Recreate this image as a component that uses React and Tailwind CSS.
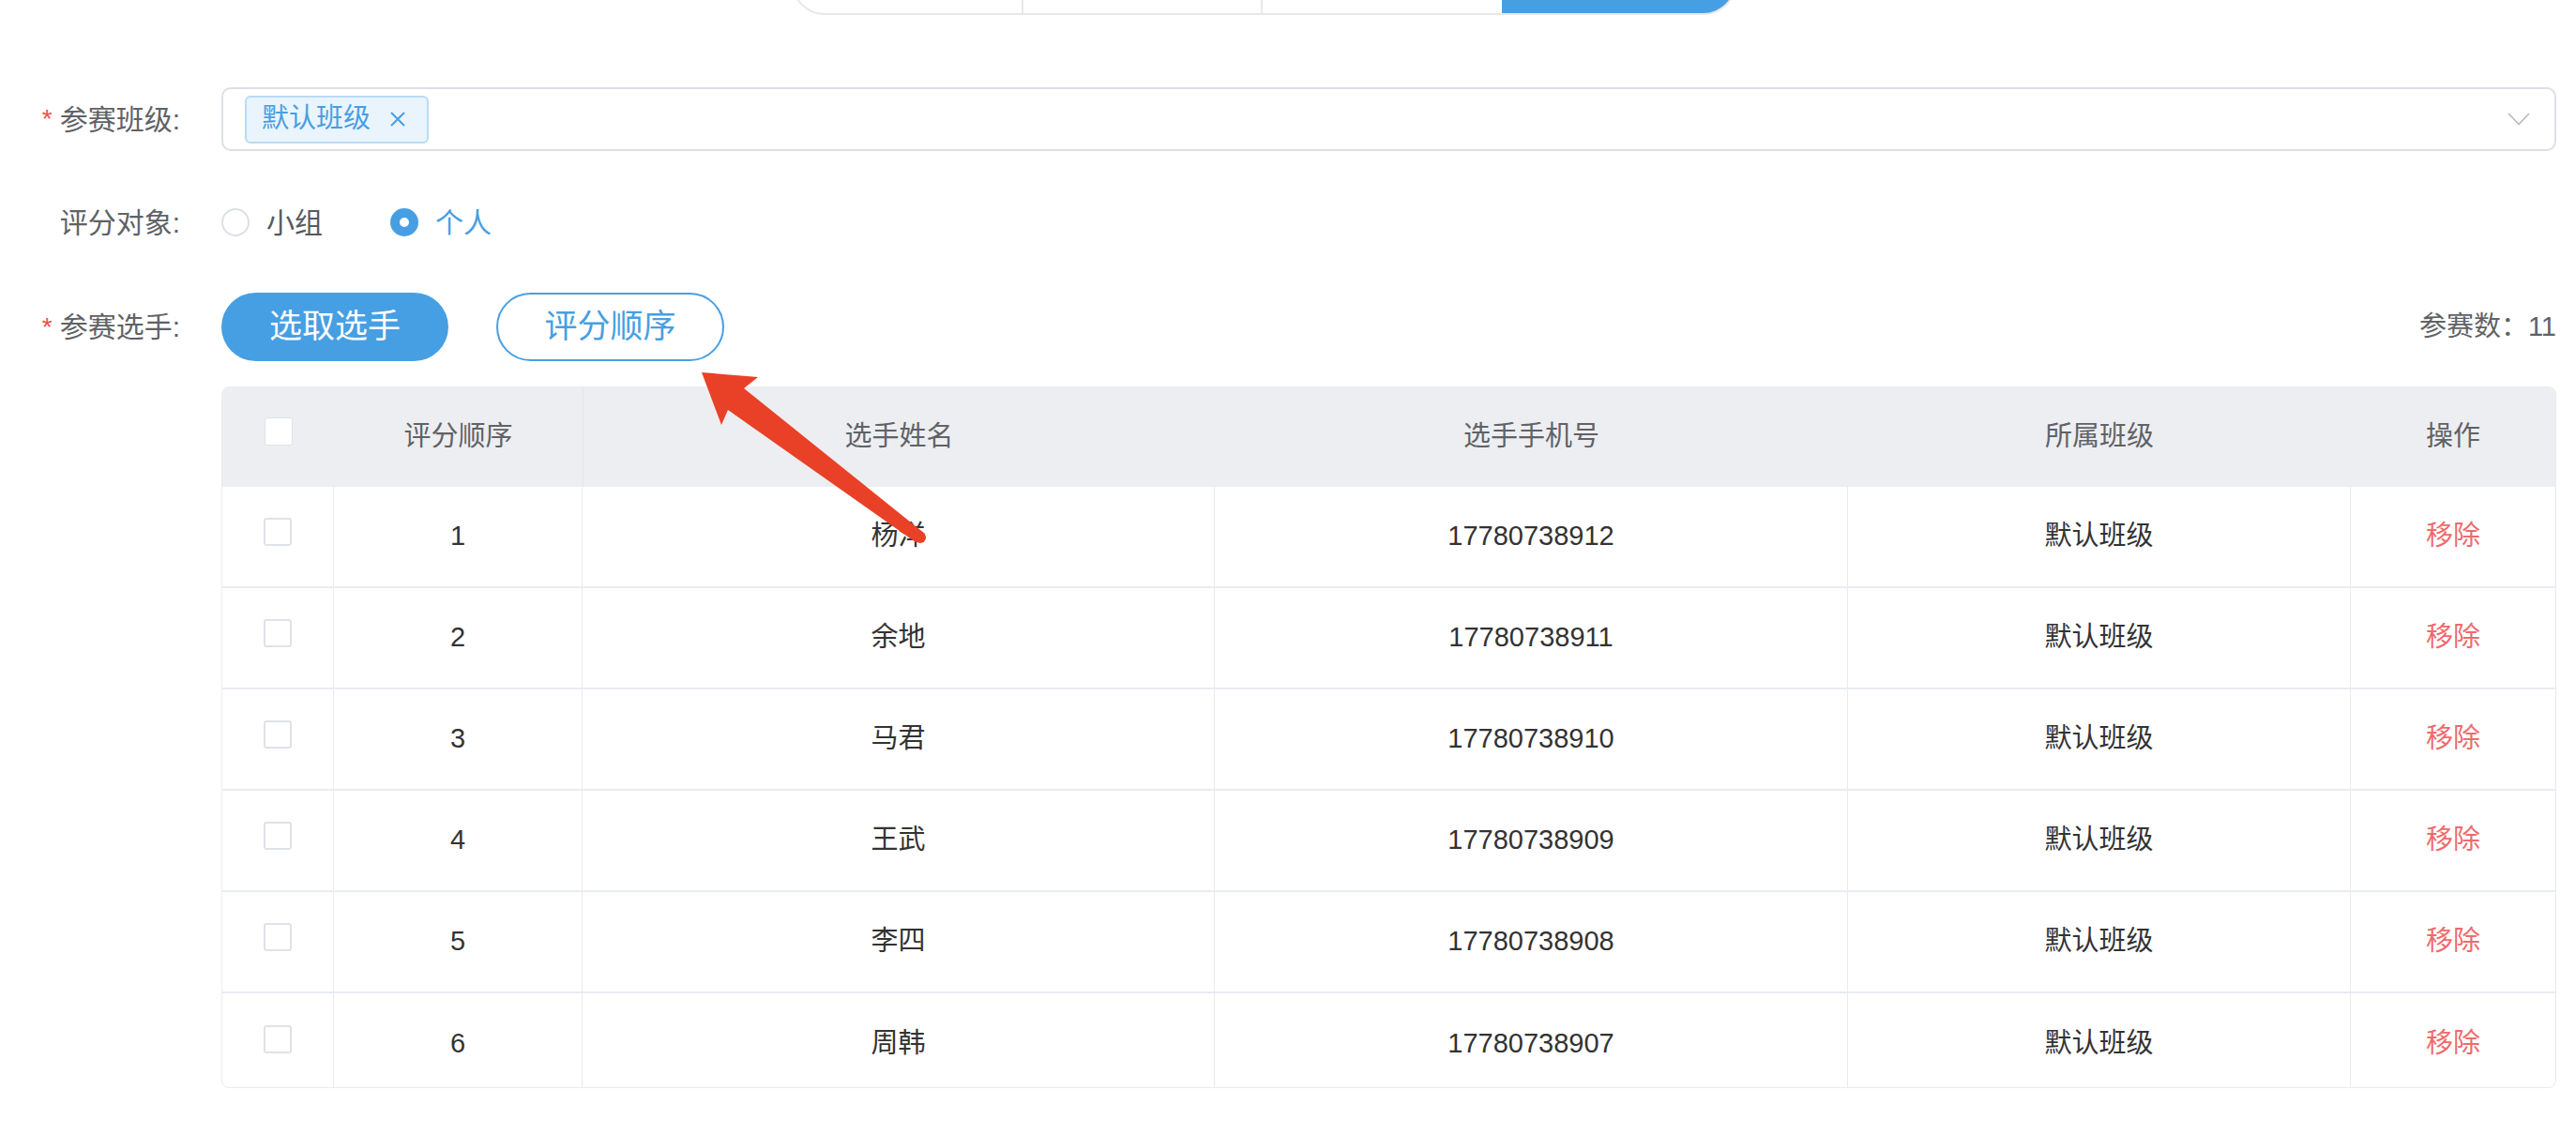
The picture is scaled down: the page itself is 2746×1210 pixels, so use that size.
import React from 'react';

const players = [
  { order: 1, name: '杨洋', phone: '17780738912' },
  { order: 2, name: '余地', phone: '17780738911' },
  { order: 3, name: '马君', phone: '17780738910' },
  { order: 4, name: '王武', phone: '17780738909' },
  { order: 5, name: '李四', phone: '17780738908' },
  { order: 6, name: '周韩', phone: '17780738907' },
];

const cols = ['w-[119px]', 'w-[265px]', 'w-[674px]', 'w-[675px]', 'w-[536px]', 'flex-1'];

function Label({ required, children }) {
  return (
    <div className="w-[236px] shrink-0 pr-[44px] flex justify-end items-center text-[30px] text-[#606266]">
      {required && <span className="text-[#f0504a] mr-[8px] text-[28px]">*</span>}
      <span>{children}</span>
    </div>
  );
}

function Checkbox() {
  return <div className="w-[30px] h-[30px] rounded-[3px] border-2 border-[#dfe2e8] bg-white mb-[10px]" />;
}

function Cell({ i, children, className = '' }) {
  return (
    <div className={`${cols[i]} h-full flex items-center justify-center ${i < 5 ? 'border-r border-[#e8ebf1]' : ''} ${className}`}>
      {children}
    </div>
  );
}

export default function App() {
  return (
    <div className="relative flex flex-col w-[2746px] h-[1210px] overflow-hidden bg-white font-['Liberation_Sans','Noto_Sans_CJK_SC',sans-serif]">
      {/* segmented tabs, cut at the top */}
      <div className="-mt-[54px] ml-[844px] w-[1007px] h-[70px] shrink-0 flex rounded-full border-2 border-[#e8e8e8] overflow-hidden">
        <div className="w-[245px] border-r-2 border-[#e8e8e8]" />
        <div className="w-[255px] border-r-2 border-[#e8e8e8]" />
        <div className="w-[255px]" />
        <div className="flex-1 bg-[#479fe3]" />
      </div>

      {/* 参赛班级 */}
      <div className="mt-[77px] flex items-center h-[68px] shrink-0">
        <Label required>参赛班级:</Label>
        <div className="w-[2489px] h-[68px] rounded-[10px] border-2 border-[#dcdfe6] flex items-center pl-[23px] pr-[26px]">
          <div className="h-[51px] flex items-center pl-[16px] pr-[22px] rounded-[6px] border-2 border-[#b9dbf5] bg-[#eaf4fc] text-[#479fe3] text-[29px]">
            <span>默认班级</span>
            <svg className="ml-[20px]" width="18" height="18" viewBox="0 0 18 18">
              <path d="M2 2 L16 16 M16 2 L2 16" stroke="#479fe3" strokeWidth="2" fill="none" />
            </svg>
          </div>
          <div className="flex-1" />
          <svg width="24" height="14" viewBox="0 0 24 14">
            <path d="M1 1 L12 12.5 L23 1" stroke="#b8bcc4" strokeWidth="1.8" fill="none" />
          </svg>
        </div>
      </div>

      {/* 评分对象 */}
      <div className="mt-[46px] flex items-center h-[60px] shrink-0">
        <Label>评分对象:</Label>
        <div className="flex items-center text-[30px]">
          <div className="w-[30px] h-[30px] rounded-full border-2 border-[#dcdfe6] bg-white" />
          <span className="ml-[18px] text-[#555a61]">小组</span>
          <div className="ml-[72px] w-[30px] h-[30px] rounded-full bg-[#479fe3] flex items-center justify-center">
            <div className="w-[10px] h-[10px] rounded-full bg-white" />
          </div>
          <span className="ml-[18px] text-[#479fe3]">个人</span>
        </div>
      </div>

      {/* 参赛选手 */}
      <div className="mt-[45px] flex items-center h-[73px] shrink-0">
        <Label required>参赛选手:</Label>
        <div className="w-[2489px] flex items-center">
          <button className="w-[242px] h-[73px] rounded-full bg-[#479fe3] text-white text-[35px]">选取选手</button>
          <button className="ml-[51px] w-[243px] h-[73px] rounded-full border-2 border-[#479fe3] bg-white text-[#479fe3] text-[35px]">评分顺序</button>
          <div className="flex-1" />
          <span className="text-[29px] text-[#606266]">参赛数：11</span>
        </div>
      </div>

      {/* table */}
      <div className="mt-[27px] ml-[236px] w-[2489px] h-[748px] shrink-0 rounded-[8px] border border-[#e8ebf1] overflow-hidden">
        <div className="h-[106px] flex bg-[#edeef1] text-[29px] text-[#606266]">
          {['', '评分顺序', '选手姓名', '选手手机号', '所属班级', '操作'].map((h, i) => (
            <div key={i} className={`${cols[i]} h-full flex items-center justify-center ${i === 2 ? 'border-l border-[#e4e6ea]' : ''}`}>
              {i === 0 ? <div className="w-[30px] h-[30px] rounded-[3px] border border-[#dfe2e8] bg-white mb-[12px]" /> : h}
            </div>
          ))}
        </div>
        {players.map((p, idx) => (
          <div key={p.order} className={`h-[108px] flex text-[29px] text-[#333] ${idx < players.length - 1 ? 'border-b-2 border-[#e9ecf2]' : ''}`}>
            <Cell i={0}><Checkbox /></Cell>
            <Cell i={1}>{p.order}</Cell>
            <Cell i={2}>{p.name}</Cell>
            <Cell i={3}>{p.phone}</Cell>
            <Cell i={4}>默认班级</Cell>
            <Cell i={5} className="text-[#ee6b6b]">移除</Cell>
          </div>
        ))}
      </div>

      {/* annotation arrow */}
      <svg className="absolute left-0 top-0 pointer-events-none" width="2746" height="1210" viewBox="0 0 2746 1210">
        <polygon
          points="748,397 808,402 793,414 986,569 976,578 776,437 769,453"
          fill="#e94128"
        />
        <circle cx="981" cy="573" r="6" fill="#e94128" />
      </svg>
    </div>
  );
}
